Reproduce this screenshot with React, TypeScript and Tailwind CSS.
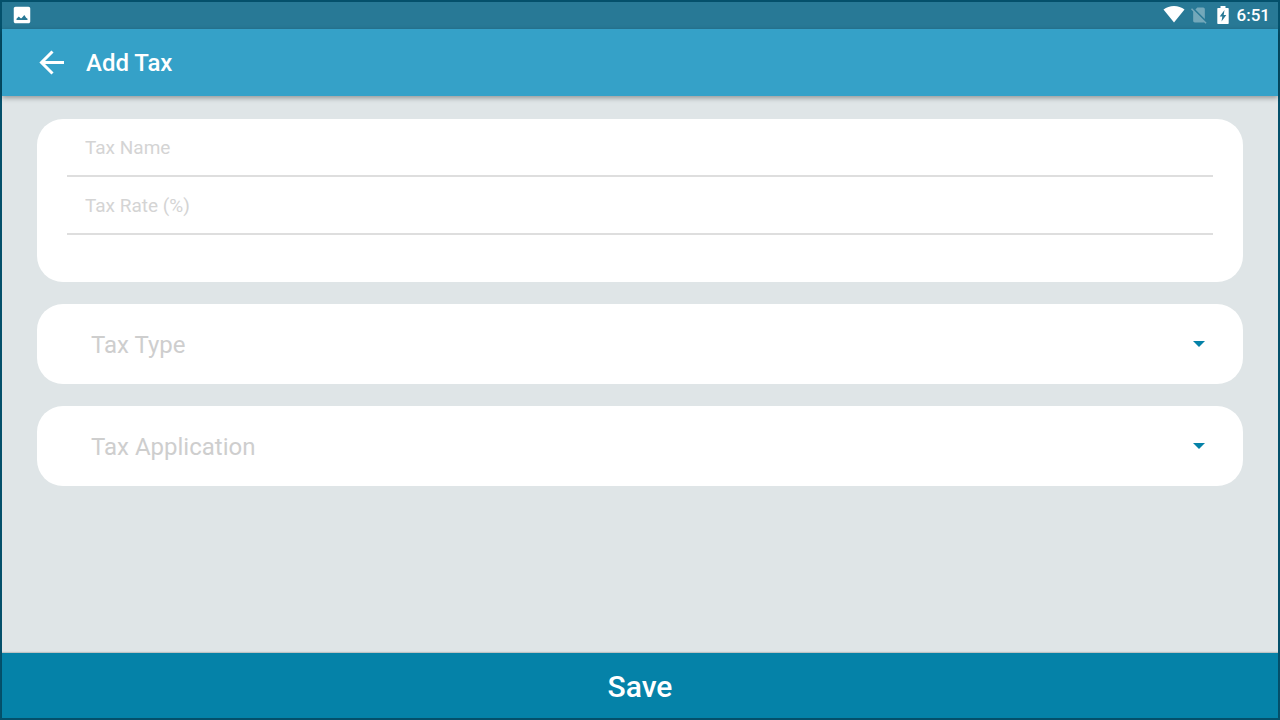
import React from "react";

const textFields = [
  { id: "tax-name", label: "Tax Name" },
  { id: "tax-rate", label: "Tax Rate (%)" },
];

const selectFields = [
  { id: "tax-type", label: "Tax Type", options: ["Percentage", "Fixed Amount"] },
  { id: "tax-application", label: "Tax Application", options: ["Included in Price", "Added to Price"] },
];

function StatusBar() {
  return (
    <div className="flex h-[27px] shrink-0 items-center justify-between bg-[#287996] pb-[2px] pl-[9px] pr-2 text-white">
      <svg viewBox="0 0 24 24" className="h-[22px] w-[22px]" fill="currentColor" aria-hidden="true">
        <path d="M21 19V5c0-1.100-.9-2-2-2H5c-1.100 0-2 .9-2 2v14c0 1.100.9 2 2 2h14c1.100 0 2-.9 2-2zM6 17.500V16l2.500-2.500 2 2h1L14.500 12l2 3 1.500 1v1.500z" fillRule="evenodd" />
      </svg>
      <div className="flex items-center">
        <svg viewBox="0 0 22 17" className="mr-1 h-[17px] w-[22px]" fill="currentColor" aria-hidden="true">
          <path d="M11 16.500 21.500 3.600C18.500 1.300 15 0 11 0S3.500 1.300.5 3.600z" />
        </svg>
        <svg viewBox="0 0 24 24" className="mr-2 h-5 w-5 opacity-35" fill="currentColor" aria-hidden="true">
          <path d="M18.990 5c0-1.100-.89-2-1.990-2h-7L7.660 5.340 19 16.680 18.990 5zM3.650 3.880L2.380 5.150 5 7.770V19c0 1.100.9 2 2 2h10.010c.35 0 .67-.1.96-.26l1.880 1.880 1.270-1.270L3.650 3.880z" />
        </svg>
        <svg viewBox="0 0 12 18" className="mr-2 h-[18px] w-3" fill="currentColor" aria-hidden="true">
          <path d="M3.500 0h5v2H11q.7 0 .7.700v14.600q0 .7-.7.700H1q-.7 0-.7-.7V2.700Q.3 2 1 2h2.500zM7.500 4 2.700 10.500h2.600L4.500 15.500 9.300 9H6.700z" fillRule="evenodd" />
        </svg>
        <span className="text-[17px] font-medium leading-6">6:51</span>
      </div>
    </div>
  );
}

function SelectCard({ id, label, options }: { id: string; label: string; options: string[] }) {
  return (
    <div className="relative h-20 rounded-[26px] bg-white">
      <select
        id={id}
        aria-label={label}
        defaultValue=""
        className="h-full w-full appearance-none rounded-[26px] bg-transparent pl-[54px] pr-20 pt-[2px] text-[24px] text-[#cecece] outline-none"
      >
        <option value="" disabled hidden>
          {label}
        </option>
        {options.map((option) => (
          <option key={option} value={option} className="text-gray-800">
            {option}
          </option>
        ))}
      </select>
      <div className="pointer-events-none absolute inset-y-0 right-[38px] flex items-center">
        <svg viewBox="0 0 12 6" className="h-[6px] w-3 fill-[#0582a8]" aria-hidden="true">
          <path d="M0 0h12L6 6z" />
        </svg>
      </div>
    </div>
  );
}

export default function App() {
  return (
    <div className="flex min-h-screen flex-col border-2 border-[#04506b] bg-[#dfe5e7] font-['Roboto',sans-serif]">
      <StatusBar />
      <header className="flex h-[67px] shrink-0 items-center gap-[22px] bg-[#35a1c8] pl-[37px] text-white shadow-[0_2px_5px_rgba(0,0,0,0.35)]">
        <button type="button" aria-label="Back">
          <svg viewBox="0 0 25 25" className="h-[25px] w-[25px]" fill="none" stroke="currentColor" strokeWidth="3" aria-hidden="true">
            <path d="M25 12.500H2.500M13.500 1.500l-11 11 11 11" />
          </svg>
        </button>
        <h1 className="text-[24px] font-medium">Add Tax</h1>
      </header>

      <form id="tax-form" className="flex flex-1 flex-col gap-[22px] px-[35px] pb-6 pt-[23px]">
        <div className="rounded-[26px] bg-white px-[30px] pb-[47px]">
          {textFields.map((field) => (
            <input
              key={field.id}
              id={field.id}
              type="text"
              aria-label={field.label}
              placeholder={field.label}
              className="block h-[58px] w-full border-b-2 border-[#dedede] px-[18px] text-[19px] text-gray-700 outline-none placeholder:text-[#d4d4d4]"
            />
          ))}
        </div>
        {selectFields.map((field) => (
          <SelectCard key={field.id} {...field} />
        ))}
      </form>

      <button
        type="submit"
        form="tax-form"
        className="h-[65px] shrink-0 bg-[#0582a8] pt-[2px] text-[30px] font-medium text-white shadow-[0_-1px_1px_rgba(0,0,0,0.15)]"
      >
        Save
      </button>
    </div>
  );
}
